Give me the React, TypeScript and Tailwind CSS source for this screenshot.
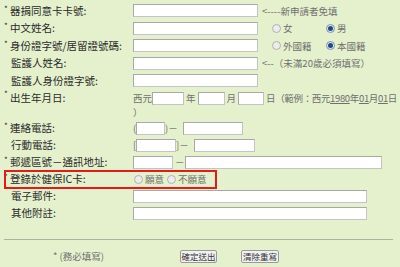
import type { ReactNode } from 'react';

const FONT = "font-['Noto_Sans_CJK_TC','Liberation_Sans',sans-serif]";

function Field({ w }: { w: string }) {
  return <input className={`h-[13px] ${w} shrink-0 border border-[#c4c4c4] border-t-[#a8a8a8] border-l-[#a8a8a8] bg-white`} />;
}

function Radio({ checked, label }: { checked?: boolean; label: string }) {
  return (
    <span className="flex items-center gap-[2px]">
      <span
        className={`flex h-[9px] w-[9px] items-center justify-center rounded-full border ${
          checked ? 'border-[#7b93b8] bg-[#dde7f4]' : 'border-[#b0b0b0] bg-[#ececec]'
        }`}
      >
        {checked && <span className="h-[5px] w-[5px] rounded-full bg-[#24477c]" />}
      </span>
      <span>{label}</span>
    </span>
  );
}

function Row({ label, star, h = 'h-[17.5px]', children }: { label: string; star?: boolean; h?: string; children?: ReactNode }) {
  return (
    <div className={`flex ${h} items-center`}>
      <div className={`flex w-[133px] shrink-0 items-center text-[10.5px] text-[#2a2a2a] ${star ? 'pl-[4px]' : 'pl-[11px]'}`}>
        {star && <span className="w-[6px] self-start text-[8px] leading-[8px]">*</span>}
        <span>{label}</span>
      </div>
      <div className="flex items-center whitespace-nowrap text-[9.5px] text-[#707070]">{children}</div>
    </div>
  );
}

export default function App() {
  return (
    <div className={`h-[267px] w-[400px] overflow-hidden bg-[#e5f1cd] pt-[2px] leading-[12px] ${FONT}`}>
      <Row label="器捐同意卡卡號:" star>
        <Field w="w-[125px]" />
        <span className="ml-[4px]">&lt;----新申請者免填</span>
      </Row>
      <Row label="中文姓名:" star>
        <Field w="w-[125px]" />
        <span className="ml-[14px] w-[54px]"><Radio label="女" /></span>
        <Radio label="男" checked />
      </Row>
      <Row label="身份證字號/居留證號碼:" star>
        <Field w="w-[125px]" />
        <span className="ml-[14px] w-[54px]"><Radio label="外國籍" /></span>
        <Radio label="本國籍" checked />
      </Row>
      <Row label="監護人姓名:">
        <Field w="w-[125px]" />
        <span className="ml-[4px]">&lt;--（未滿20歲必須填寫）</span>
      </Row>
      <Row label="監護人身份證字號:">
        <Field w="w-[125px]" />
      </Row>

      <div className="flex h-[30px]">
        <div className="flex h-[17.5px] w-[133px] shrink-0 items-center pl-[4px] text-[10.5px] text-[#2a2a2a]">
          <span className="w-[6px] self-start text-[8px] leading-[8px]">*</span>
          <span>出生年月日:</span>
        </div>
        <div className="text-[9.5px] text-[#707070]">
          <div className="flex h-[17.5px] items-center whitespace-nowrap">
            <span className="w-[19px]">西元</span>
            <Field w="w-[32px]" />
            <span className="mx-[2px]">年</span>
            <Field w="w-[27px]" />
            <span className="mx-[2px]">月</span>
            <Field w="w-[26px]" />
            <span className="ml-[2px] tracking-[-0.35px]">
              日（範例：西元<u>1980</u>年<u>01</u>月<u>01</u>日
            </span>
          </div>
          <div className="leading-[11px]">）</div>
        </div>
      </div>

      <Row label="連絡電話:" star h="h-[17px]">
        <span className="w-[3px]">(</span>
        <Field w="w-[29px]" />
        <span className="w-[18px]">)－</span>
        <Field w="w-[60px]" />
      </Row>
      <Row label="行動電話:" h="h-[17px]">
        <span className="w-[3px]">[</span>
        <Field w="w-[40px]" />
        <span className="w-[18px]">]－</span>
        <Field w="w-[61px]" />
      </Row>
      <Row label="郵遞區號－通訊地址:" star h="h-[17px]">
        <Field w="w-[40px]" />
        <span className="w-[12px] pl-[2px]">－</span>
        <Field w="w-[197px]" />
      </Row>
      <div className="relative">
        <Row label="登錄於健保IC卡:" star h="h-[17px]">
          <span className="ml-[1px] w-[33px]"><Radio label="願意" /></span>
          <Radio label="不願意" />
        </Row>
        <span className="pointer-events-none absolute left-[4px] top-[-1px] h-[19px] w-[213px] border-2 border-[#e31b1b]" />
      </div>
      <Row label="電子郵件:" h="h-[17px]">
        <Field w="w-[234px]" />
      </Row>
      <Row label="其他附註:" h="h-[17px]">
        <Field w="w-[234px]" />
      </Row>

      <div className="ml-[4px] mr-[7px] mt-[17px] h-px bg-[#a9b3a0]" />

      <div className="mt-[10px] flex h-[13px] items-center text-[9.5px] text-[#707070]">
        <span className="w-[180px] pl-[53px]">* (務必填寫)</span>
        <button className="flex h-[13px] w-[37px] items-center justify-center rounded-[2px] border border-[#9a9a9a] bg-[#f1f1f1] text-[8.5px] text-[#333]">
          確定送出
        </button>
        <button className="ml-[24px] flex h-[13px] w-[38px] items-center justify-center rounded-[2px] border border-[#9a9a9a] bg-[#f1f1f1] text-[8.5px] text-[#333]">
          清除重寫
        </button>
      </div>
    </div>
  );
}
